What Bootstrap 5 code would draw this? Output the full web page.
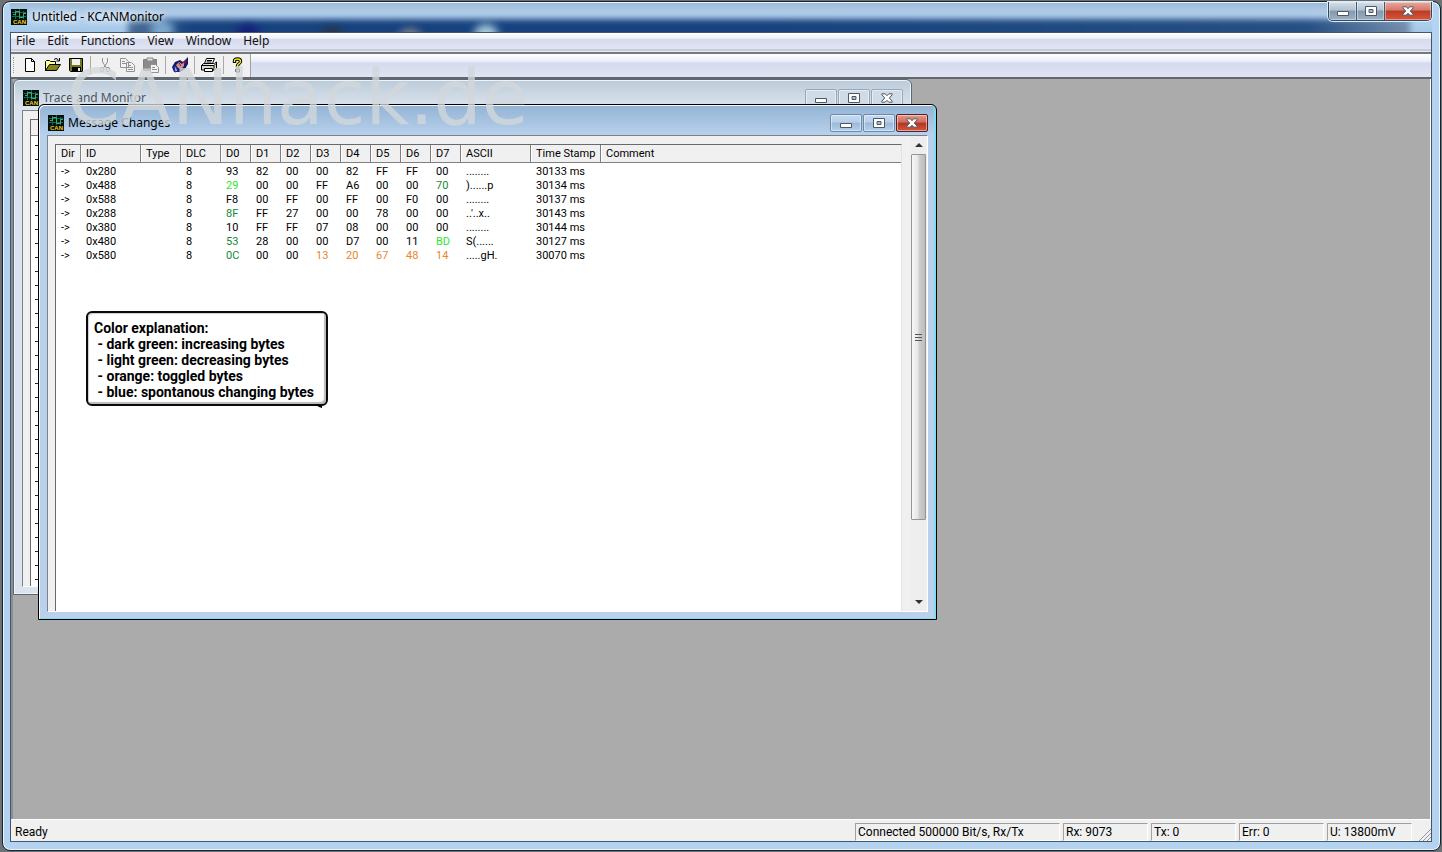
<!DOCTYPE html>
<html lang="en">
<head>
<meta charset="utf-8">
<meta name="viewport" content="width=device-width, initial-scale=1">
<title>Untitled - KCANMonitor</title>
<link rel="stylesheet" href="https://cdn.jsdelivr.net/npm/bootstrap@5.3.0/dist/css/bootstrap.min.css">
<style>
:root { --ui: "Noto Sans", "Open Sans", sans-serif; --data: Roboto, "Liberation Sans", sans-serif; }
body { background: #6f7274; font: 12px/16px var(--ui); color: #000; }
.app-frame { height: 100vh; padding: 1px 1px 1px 2px; }
.app-win { border: 1px solid #16222e; border-radius: 8px; background: #b4d3f0; box-shadow: inset 0 0 0 1px #e9f6ff; padding: 0 8px 8px 7px; }
.app-title { height: 30px; padding-left: 1px; position: relative; }
.glass { inset: 1px 0 0 0; overflow: hidden; background: linear-gradient(#9dbbd6, #b6d3f0 45%, #a4c8e8); }
.glass-dark { left: 118px; right: 22px; top: 16px; height: 24px; background: linear-gradient(90deg, #4b6f98, #17427e 5%, #17427e 50%, #264f82 92%, #7590ae); filter: blur(3px); }
.glow { width: 24px; height: 22px; border-radius: 50%; filter: blur(4px); top: 16px; }
.app-title > .title-text { z-index: 1; margin-left: 5px; text-shadow: 0 0 6px #fff, 0 0 8px #fff; }
.capbar { top: 0; right: 0; z-index: 1; height: 19px; border: 1px solid #34495c; border-top: 0; border-radius: 0 0 5px 5px; overflow: hidden; box-shadow: 0 0 0 1px #dcecfa; }
.capbar button { border: 0; border-right: 1px solid #46596c; padding: 0; width: 28px; background: linear-gradient(#d5dfe8, #b2c2d0 45%, #8499ad 50%, #9bb0c4); box-shadow: inset 0 0 0 1px #ffffff66; }
.capbar button:last-child { width: 46px; border-right: 0; background: linear-gradient(#e9a99b, #d4796b 45%, #bd3a25 50%, #d4593e); }
.client { border: 1px solid #44586b; background: #f0f0f0; }
.menus { height: 19px; background: linear-gradient(#fff, #eef0fa 28%, #d5dbee 32%, #e0e4f3 85%, #b5b9c8 88%, #f4f5fa); }
.menus a { color: #111; text-decoration: none; line-height: 16px; padding: 0 4px 0 5px; margin-right: 4px; }
.menus a + a { margin-left: -1px; }
.tools { height: 27px; border-top: 2px solid #77797d; border-bottom: 2px solid #63676d; background: linear-gradient(#fff, #eef0fa 28%, #d5dbee 42%, #e0e4f3); }
.toolset { background: #f0f0f0; border-right: 1px solid #9da0a8; width: 240px; padding: 0 0 2px 6px; }
.toolset button { width: 23px; height: 21px; border: 0; background: none; padding: 0; }
.toolset .rule { width: 1px; height: 18px; margin: 0 2px 0 3px; background: #a9a9a9; }
.toolset .grip { width: 1px; height: 16px; border-left: 1px dotted #999; margin-left: -4px; margin-right: 4px; }
.canvas { background: #ababab; border-left: 2px solid #8a8f95; border-right: 1px solid #fff; overflow: hidden; }
.status { height: 22px; border-top: 1px solid #fff; padding-top: 2px; font: 12px/18px var(--data); }
.status .pane { border: 1px solid; border-color: #a0a0a0 #fff #fff #a0a0a0; padding-left: 2px; height: 18px; line-height: 17px; margin-right: 3px; width: 85px; }
.status .pane-wide { width: 205px; }
.mdi { border: 1px solid #17242f; border-radius: 6px 6px 0 0; width: 899px; height: 516px; padding: 0 8px 7px; }
.mdi-back { left: 0; top: 0; background: linear-gradient(#bccbd9, #dbe4ee 28px); border-color: #5a6872; box-shadow: inset 0 0 0 1px #edf3f8; color: #4c5560; }
.mdi-front { left: 25px; top: 25px; background: linear-gradient(#94b3d3, #b7d1ed 30px, #b9d1ec); box-shadow: inset 1px 1px 0 #f4faff, inset -2px -1px 0 #7fdcf5; border-color: #000; }
.mdi-head { height: 30px; padding: 6px 0 0 1px; }
.mdi-head button { width: 32px; height: 18px; padding: 0; margin-left: 1px; border: 1px solid #6d89a8; border-radius: 2px; background: linear-gradient(#c5daf0, #b7cfe8 45%, #9bb9d8 50%, #b4cfea); box-shadow: inset 0 0 0 1px #ffffff77; }
.mdi-back .mdi-head button { background: #cfdbe7; border-color: #98a6b6; }
.mdi-head .x-red { background: linear-gradient(#e3988b, #cf6c5d 45%, #b5341f 50%, #cc5a43); border-color: #5c1d1d; }
.mdi-body { background: #f0f0f0; border: 1px solid #7c8087; border-right-color: #fff; border-bottom-color: #fff; }
.list { border: 1px solid #696969; border-right-color: #e3e3e3; border-bottom: 0; background: #fff; margin: 8px 9px 0 7px; overflow: hidden; }
.frames { table-layout: fixed; width: 100%; font: 11px/14px var(--data); border-collapse: separate; border-spacing: 0; }
.frames th { background: #f0f0f0; font-weight: 400; height: 17px; line-height: 16px; padding: 1px 0 0 5px; border-right: 1px solid #7d7d7d; border-bottom: 1px solid #808080; white-space: nowrap; box-shadow: inset 1px 0 0 #fff; }
.frames th:last-child { border-right: 0; }
.frames td { padding: 0 0 0 5px; height: 14px; white-space: nowrap; }
.frames tbody tr:first-child td { border-top: 2px solid #fff; height: 16px; }
.frames .inc { color: #128a35; } .frames .dec { color: #2ee62e; } .frames .tog { color: #e8872e; }
.sbar { width: 15px; background: #eee; margin-right: 1px; }
.sbar .thumb { height: 366px; border: 1px solid #959595; border-radius: 1px; background: linear-gradient(90deg, #f7f7f7, #e6e6e6 45%, #cfcfcf 55%, #bcbcbc); }
.note { left: 73px; top: 232px; width: 242px; border: 2px solid #0a0a0a; border-radius: 6px; background: #fff; box-shadow: inset -2px -2px 1px #bbb, inset 1px 1px 1px #ccc; font: bold 14px/16px Roboto, "Liberation Sans", sans-serif; padding: 7px 0 4px 6px; white-space: pre; }
.note .tail { right: 4px; bottom: -5px; }
.watermark { left: 64px; top: 52px; font: 76px/88px "DejaVu Sans", sans-serif; color: #d3d8db; opacity: .78; z-index: 5; pointer-events: none; }
.stub-head { height: 16px; background: #f0f0f0; border-bottom: 1px solid #808080; }
.stub { width: 12px; margin-left: 4px; background: repeating-linear-gradient(#fff 0 13px, #222 13px 14px) 0 -4px; }
svg { display: block; }
</style>
</head>
<body class="m-0 overflow-hidden">
<svg width="0" height="0" class="position-absolute" aria-hidden="true">
  <symbol id="app" viewBox="0 0 16 16"><path fill="#07100d" d="M0 0h16v16H0z"/><path d="M1 3.500h14M1 7.500h14M4.500 1v9M8.500 0v10M12.500 2v8" stroke="#126b4b" fill="none"/><path d="M2 5.500h2.500v-3h4v6h4v-4H15" stroke="#35b07c" fill="none"/><text x="2" y="15" font-family="Liberation Sans" font-size="6" font-weight="700" fill="#f2cf1d">CAN</text></symbol>
  <symbol id="min" viewBox="0 0 12 10"><path d="M.5 5.500h11v4H.5z" fill="#fff" stroke="#4c5866"/></symbol>
  <symbol id="max" viewBox="0 0 12 10"><path d="M.5.5h11v9H.5z" fill="#fff" stroke="#4c5866"/><path d="M4 3.500h4v3H4z" fill="#a9bccf" stroke="#4c5866"/></symbol>
  <symbol id="close" viewBox="0 0 12 10"><path d="M.8.8h3.400L6 2.700 7.800.8h3.400v1L8.300 5l2.900 3.200v1H7.800L6 7.300 4.200 9.200H.8v-1L3.700 5 .8 1.800z" fill="#fff" stroke="#4c5866"/></symbol>
</svg>

<div class="app-frame">
<main class="app-win d-flex flex-column h-100 position-relative">
  <header class="app-title d-flex align-items-center flex-shrink-0">
    <div class="glass position-absolute">
      <div class="glass-dark position-absolute"></div>
      <div class="glow position-absolute" style="left:140px;background:#7ba6cc"></div>
      <div class="glow position-absolute" style="left:226px;background:#151b78;top:22px"></div>
      <div class="glow position-absolute" style="left:310px;background:#2b3343;top:24px"></div>
      <div class="glow position-absolute" style="left:388px;background:#8b8790;top:26px"></div>
      <div class="glow position-absolute" style="left:464px;background:#a9cbdc;top:21px"></div>
    </div>
    <svg class="position-relative" width="16" height="16"><use href="#app"/></svg>
    <span class="title-text position-relative">Untitled - KCANMonitor</span>
    <div class="capbar position-absolute d-flex">
      <button aria-label="Minimize"><svg class="mx-auto" width="12" height="10"><use href="#min"/></svg></button>
      <button aria-label="Restore"><svg class="mx-auto" width="12" height="10"><use href="#max"/></svg></button>
      <button aria-label="Close"><svg class="mx-auto" width="12" height="10"><use href="#close"/></svg></button>
    </div>
  </header>

  <div class="client d-flex flex-column flex-grow-1 position-relative">
    <nav class="menus d-flex flex-shrink-0">
      <a href="#">File</a><a href="#">Edit</a><a href="#">Functions</a><a href="#">View</a><a href="#">Window</a><a href="#">Help</a>
    </nav>
    <div class="tools d-flex flex-shrink-0">
      <div class="toolset d-flex align-items-center">
        <span class="grip"></span>
        <button aria-label="New"><svg class="mx-auto" width="16" height="16"><path d="M3.500 1.500h6l3 3v10h-9z" fill="#fff" stroke="#000"/><path d="M9.500 1.500v3h3" fill="none" stroke="#000"/></svg></button>
        <button aria-label="Open"><svg class="mx-auto" width="16" height="16"><path d="M.5 13.500v-9l1-1h3l1 1h5v3" fill="#ffff9c" stroke="#000"/><path d="M.5 13.500l4-6h11l-4 6z" fill="#8a8614" stroke="#000"/><path d="M9 2.500q2-2 4 0l1 1M14.500 1v3h-3" fill="none" stroke="#000"/></svg></button>
        <button aria-label="Save"><svg class="mx-auto" width="16" height="16"><path d="M1.500 1.500h13v13h-12l-1-1z" fill="#77751a" stroke="#000"/><path d="M4 2h8v6H4z" fill="#f0f0f0"/><path d="M4 10h9v4H4z" fill="#000"/><path d="M10 11h2v3h-2z" fill="#eee"/></svg></button>
        <span class="rule"></span>
        <button aria-label="Cut"><svg class="mx-auto" width="16" height="16" fill="none" stroke="#929292"><path d="M5.500 1v4l4 6M10.500 1v4l-4 6"/><ellipse cx="5" cy="12.500" rx="1.700" ry="2.200"/><ellipse cx="11" cy="12.500" rx="1.700" ry="2.200"/></svg></button>
        <button aria-label="Copy"><svg class="mx-auto" width="16" height="16" fill="#f3f3f3" stroke="#929292"><path d="M.5 1.500h5l3 3v6h-8zM6.500 5.500h5l3 3v6h-8z"/><path d="M2 4.500h3M2 6.500h4M8 8.500h3M8 10.500h5M8 12.500h5"/></svg></button>
        <button aria-label="Paste"><svg class="mx-auto" width="16" height="16"><path d="M.5 2.500h13v11H.5z" fill="#8b8b8b" stroke="#808080"/><path d="M4 1h6v3H4z" fill="#ddd" stroke="#888"/><path d="M7.500 7.500h5l3 3v5h-8z" fill="#f3f3f3" stroke="#929292"/><path d="M9 10.500h3M9 12.500h5" stroke="#929292"/></svg></button>
        <span class="rule"></span>
        <button aria-label="Connect"><svg class="mx-auto" width="16" height="16"><path d="M0 10l3-5 5-2 3 2 5-5v7l-3 5-5 3H2z" fill="#16166a"/><path d="M4 8l3-3 3 2 2-2v4l-3 3-3-1z" fill="#d9917f"/><path d="M2 9l2 1 2 4-3 1zM7 6l2 3" fill="#9fa3e8" stroke="#2525a0"/><path d="M11 5l4-3-2 6z" fill="#7c1d35"/></svg></button>
        <span class="rule"></span>
        <button aria-label="Print"><svg class="mx-auto" width="16" height="16" stroke="#000"><path d="M3.500 6.500l2-5h8l-2 5z" fill="#fff"/><path d="M6 3.500h5M5.500 5h5" /><path d="M.5 8.500l2-2h11l2-1.500v6l-2 2H.5z" fill="#d8d8d8"/><path d="M.5 8.500h12.500l2-2M13 8.500v5M3.500 11.500h8v3h-8z" fill="#fff"/><path d="M9 10h2" stroke="#d0c000"/></svg></button>
        <span class="rule"></span>
        <button aria-label="Help"><svg class="mx-auto" width="16" height="16" fill="none"><path d="M4.500 6V4q0-2 3-2t3 2.300q0 1.400-1.500 2.400T7.500 9v1.500" stroke="#000" stroke-width="3.400"/><path d="M4.500 5V4q0-2 3-2t3 2.300q0 1.400-1.500 2.400T7.500 9v1" stroke="#f4e800" stroke-width="1.400"/><path d="M6 12h3.500v3H6z" fill="#f4e800" stroke="#000"/></svg></button>
      </div>
    </div>

    <div class="canvas flex-grow-1 position-relative">
      <section class="mdi mdi-back position-absolute d-flex flex-column">
        <div class="mdi-head d-flex align-items-center flex-shrink-0">
          <svg width="16" height="16"><use href="#app"/></svg><span class="ms-1 me-auto">Trace and Monitor</span>
          <button aria-label="Minimize trace"><svg class="mx-auto" width="12" height="10"><use href="#min"/></svg></button>
          <button aria-label="Maximize trace"><svg class="mx-auto" width="12" height="10"><use href="#max"/></svg></button>
          <button aria-label="Close trace"><svg class="mx-auto" width="12" height="10"><use href="#close"/></svg></button>
        </div>
        <div class="mdi-body flex-grow-1 d-flex">
          <div class="list flex-grow-1"><div class="stub-head"></div><div class="stub h-100"></div></div>
        </div>
      </section>

      <section class="mdi mdi-front position-absolute d-flex flex-column">
        <div class="mdi-head d-flex align-items-center flex-shrink-0">
          <svg width="16" height="16"><use href="#app"/></svg><span class="ms-1 me-auto">Message Changes</span>
          <button aria-label="Minimize messages"><svg class="mx-auto" width="12" height="10"><use href="#min"/></svg></button>
          <button aria-label="Maximize messages"><svg class="mx-auto" width="12" height="10"><use href="#max"/></svg></button>
          <button class="x-red" aria-label="Close messages"><svg class="mx-auto" width="12" height="10"><use href="#close"/></svg></button>
        </div>
        <div class="mdi-body flex-grow-1 d-flex">
          <div class="list flex-grow-1">
            <table class="frames">
              <colgroup><col style="width:25px"><col style="width:60px"><col style="width:40px"><col style="width:40px"><col span="8" style="width:30px"><col style="width:70px"><col style="width:70px"><col></colgroup>
              <thead><tr><th>Dir</th><th>ID</th><th>Type</th><th>DLC</th><th>D0</th><th>D1</th><th>D2</th><th>D3</th><th>D4</th><th>D5</th><th>D6</th><th>D7</th><th>ASCII</th><th>Time Stamp</th><th>Comment</th></tr></thead>
              <tbody>
                <tr><td>-&gt;</td><td>0x280</td><td></td><td>8</td><td>93</td><td>82</td><td>00</td><td>00</td><td>82</td><td>FF</td><td>FF</td><td>00</td><td>........</td><td>30133 ms</td><td></td></tr>
                <tr><td>-&gt;</td><td>0x488</td><td></td><td>8</td><td class="dec">29</td><td>00</td><td>00</td><td>FF</td><td>A6</td><td>00</td><td>00</td><td class="inc">70</td><td>)......p</td><td>30134 ms</td><td></td></tr>
                <tr><td>-&gt;</td><td>0x588</td><td></td><td>8</td><td>F8</td><td>00</td><td>FF</td><td>00</td><td>FF</td><td>00</td><td>F0</td><td>00</td><td>........</td><td>30137 ms</td><td></td></tr>
                <tr><td>-&gt;</td><td>0x288</td><td></td><td>8</td><td class="inc">8F</td><td>FF</td><td>27</td><td>00</td><td>00</td><td>78</td><td>00</td><td>00</td><td>..'..x..</td><td>30143 ms</td><td></td></tr>
                <tr><td>-&gt;</td><td>0x380</td><td></td><td>8</td><td>10</td><td>FF</td><td>FF</td><td>07</td><td>08</td><td>00</td><td>00</td><td>00</td><td>........</td><td>30144 ms</td><td></td></tr>
                <tr><td>-&gt;</td><td>0x480</td><td></td><td>8</td><td class="inc">53</td><td>28</td><td>00</td><td>00</td><td>D7</td><td>00</td><td>11</td><td class="dec">BD</td><td>S(......</td><td>30127 ms</td><td></td></tr>
                <tr><td>-&gt;</td><td>0x580</td><td></td><td>8</td><td class="inc">0C</td><td>00</td><td>00</td><td class="tog">13</td><td class="tog">20</td><td class="tog">67</td><td class="tog">48</td><td class="tog">14</td><td>.....gH.</td><td>30070 ms</td><td></td></tr>
              </tbody>
            </table>
          </div>
          <div class="sbar d-flex flex-column flex-shrink-0 align-items-center">
            <svg class="my-1" width="8" height="10"><path d="M0 7l4-4 4 4z" fill="#333"/></svg>
            <div class="thumb w-100 d-flex align-items-center justify-content-center"><svg width="8" height="8"><path d="M0 1.500h7M0 4.500h7M0 7.500h7" stroke="#555"/></svg></div>
            <svg class="mt-auto mb-1" width="8" height="10"><path d="M0 3l4 4 4-4z" fill="#333"/></svg>
          </div>
        </div>
      </section>

      <div class="note position-absolute">Color explanation:
 - dark green: increasing bytes
 - light green: decreasing bytes
 - orange: toggled bytes
 - blue: spontanous changing bytes<svg class="tail position-absolute" width="6" height="4"><path d="M0 0h6v3L3 2z"/></svg></div>
    </div>

    <footer class="status d-flex align-items-center flex-shrink-0">
      <span class="me-auto ps-1">Ready</span>
      <span class="pane pane-wide">Connected 500000 Bit/s, Rx/Tx</span>
      <span class="pane">Rx: 9073</span>
      <span class="pane">Tx: 0</span>
      <span class="pane">Err: 0</span>
      <span class="pane">U: 13800mV</span>
      <svg class="align-self-end ms-1" width="12" height="13"><path d="M0 13L12 1M4 13l8-8M8 13l4-4" stroke="#999"/></svg>
    </footer>
  </div>
  <div class="watermark position-absolute">CANhack.de</div>
</main>
</div>
<script src="https://cdn.jsdelivr.net/npm/bootstrap@5.3.0/dist/js/bootstrap.bundle.min.js"></script>
</body>
</html>
